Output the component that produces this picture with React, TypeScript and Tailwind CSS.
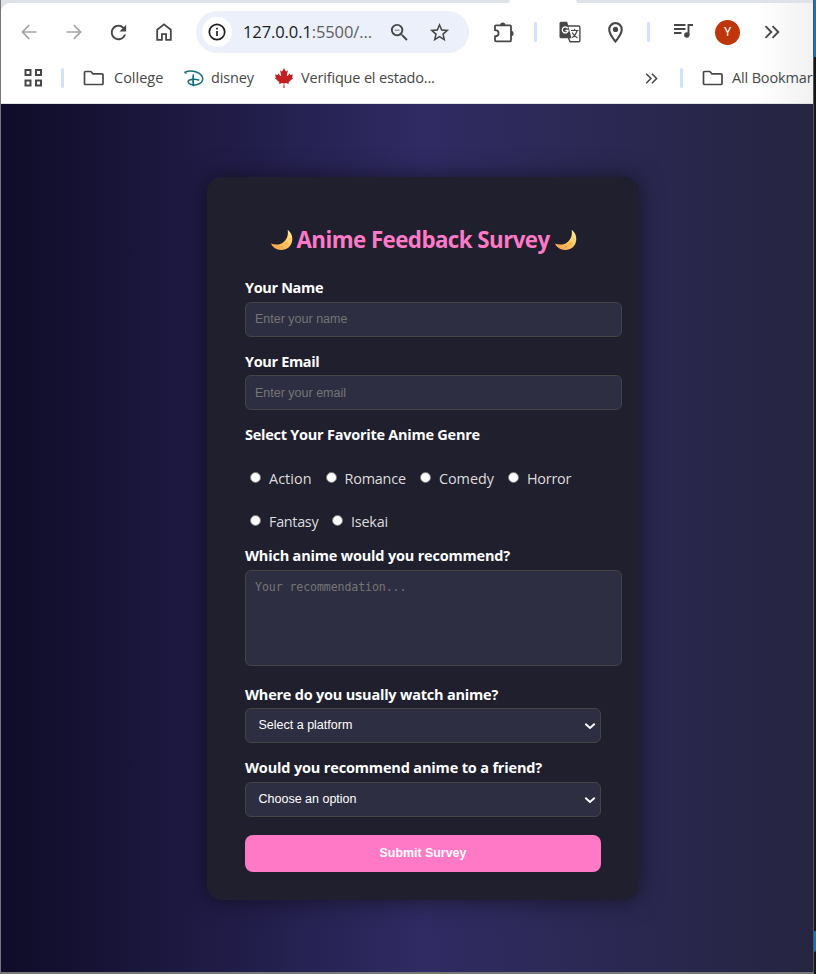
import React from "react";
import { MdOutlineLocationOn, MdZoomOut, MdStarBorder, MdRefresh } from "react-icons/md";
import { FaCanadianMapleLeaf } from "react-icons/fa";

function Moon() {
  return (
    <svg width="23" height="22" viewBox="0 0 23 22" className="shrink-0">
      <defs>
        <linearGradient id="moon" x1="0" y1="1" x2="1" y2="0">
          <stop offset="0" stopColor="#f79a4b" />
          <stop offset="0.55" stopColor="#ffc85f" />
          <stop offset="1" stopColor="#fff0a8" />
        </linearGradient>
      </defs>
      <path d="M17.6.8C21 3.400 22.800 7 22.200 11.500C21.500 17.500 16.500 21.300 10.800 21C6.500 20.800 2.800 18.600.8 14.600C5.500 16.300 10.500 16 14 12.800C17.500 9.600 18.500 5 17.600.8Z" fill="url(#moon)" />
      <circle cx="16.500" cy="14.500" r="1.300" fill="#efa246" opacity=".6" />
      <circle cx="12" cy="18" r="1" fill="#e98a3c" opacity=".5" />
      <circle cx="19.800" cy="10" r=".9" fill="#efb04c" opacity=".6" />
    </svg>
  );
}

function Arrow({ flip = false }: { flip?: boolean }) {
  return (
    <svg width="16" height="16" viewBox="0 0 16 16" fill="none" stroke="#a5a5a5" strokeWidth="1.700" className={flip ? "rotate-180" : ""}>
      <path d="M15.500 8H1.500M8.200 1.200L1.400 8l6.800 6.800" />
    </svg>
  );
}

function Folder() {
  return (
    <svg width="22" height="16" viewBox="0 0 22 16" fill="none" stroke="#474747" strokeWidth="1.700" strokeLinejoin="round">
      <path d="M1.500 2.500a1 1 0 0 1 1-1h5.300l2.200 2.300h9a1 1 0 0 1 1 1v8.700a1 1 0 0 1-1 1H2.500a1 1 0 0 1-1-1z" />
    </svg>
  );
}

function Chevrons({ size }: { size: number }) {
  return (
    <svg width={size} height={size} viewBox="0 0 16 16" fill="none" stroke="#474747" strokeWidth="1.900">
      <path d="M1.500 2.200L7.300 8l-5.800 5.800M8.500 2.200L14.300 8l-5.800 5.800" />
    </svg>
  );
}

function Divider({ className }: { className: string }) {
  return <div className={`h-5 w-[3px] shrink-0 rounded-full bg-[#d0e2fd] ${className}`} />;
}

function Toolbar() {
  return (
    <div className="flex h-[58px] items-center pl-[20px]">
      <Arrow />
      <div className="ml-[29px]"><Arrow flip /></div>
      <MdRefresh className="ml-[25px] size-[23px] text-[#474747]" />
      <svg className="ml-[26px]" width="16" height="18" viewBox="0 0 16 18" fill="none" stroke="#474747" strokeWidth="1.800">
        <path d="M1.200 6.800L8 1.300l6.800 5.500v10h-4.700v-5.600H5.900v5.600H1.200z" />
      </svg>
      <div className="ml-[24px] flex h-[42px] w-[273px] shrink-0 items-center rounded-full bg-[#ebf0fa] pl-[6px]">
        <div className="flex size-[30px] shrink-0 items-center justify-center rounded-full bg-white">
          <svg width="18" height="18" viewBox="0 0 18 18" fill="none" stroke="#202020" strokeWidth="1.700">
            <circle cx="9" cy="9" r="7.700" />
            <path d="M9 8v5M9 4.700v1.800" />
          </svg>
        </div>
        <div className="ml-[11px] w-[130px] whitespace-nowrap font-['Open_Sans',sans-serif] text-[16.500px] tracking-[-0.1px] text-[#5f5f5f]">
          <span className="text-[#202020]">127.0.0.1</span>:5500/...
        </div>
        <MdZoomOut className="ml-[15px] size-[23px] shrink-0 text-[#474747]" />
        <MdStarBorder className="ml-[17px] size-[23px] shrink-0 text-[#474747]" />
      </div>
      <svg className="ml-[24px] shrink-0" width="21" height="21" viewBox="0 0 21 21">
        <path d="M3 3.300h14a1 1 0 0 1 1 1v14a1 1 0 0 1-1 1H3a1 1 0 0 1-1-1v-4c4.800-.2 4.800-6 0-6.200V4.300a1 1 0 0 1 1-1z" fill="none" stroke="#474747" strokeWidth="1.800" />
        <path d="M7.200 3a2.600 2.600 0 0 1 5.200 0zM18 8.800a2.600 2.600 0 0 1 0 5.200z" fill="#474747" />
      </svg>
      <Divider className="ml-[20px]" />
      <svg className="ml-[22px] shrink-0" width="22" height="22" viewBox="0 0 22 22">
        <path d="M9 5h10.500a1.400 1.400 0 0 1 1.400 1.400v13a1.400 1.400 0 0 1-1.400 1.400h-8.500L9.500 17" fill="#fff" stroke="#474747" strokeWidth="1.400" />
        <path d="M2 .8h6.200l4.300 16.500H2A1.500 1.500 0 0 1 .5 15.800V2.300A1.500 1.500 0 0 1 2 .8z" fill="#474747" />
        <path d="M8.800 7.300A3 3 0 1 0 9 10.300V9.500H6.300" fill="none" stroke="#fff" strokeWidth="1.300" />
        <path d="M12 9.500h7.500M15.500 7.800v1.700M18.200 9.500c-.7 3-2.500 5.300-5 7.300M13.200 11.500c1.200 2.500 3 4.300 5.300 5.600" fill="none" stroke="#474747" strokeWidth="1.200" />
      </svg>
      <MdOutlineLocationOn className="ml-[22px] size-[25px] shrink-0 text-[#474747]" />
      <Divider className="ml-[19px]" />
      <svg className="relative -top-px ml-[23px] shrink-0" width="21" height="18" viewBox="0 0 21 18" fill="none" stroke="#474747" strokeWidth="1.900">
        <path d="M1 3h11.500M1 7h11.500M1 11h7.500M15.500 13V3h4.500" />
        <circle cx="13.800" cy="13" r="2.700" fill="#474747" stroke="none" />
      </svg>
      <div className="ml-[21px] flex size-[25px] shrink-0 items-center justify-center rounded-full bg-[#bf360c] font-[Roboto,sans-serif] text-[12px] text-white">Y</div>
      <div className="ml-[24px] shrink-0"><Chevrons size={16} /></div>
    </div>
  );
}

function Bookmarks() {
  return (
    <div className="flex h-[34px] items-center pl-[22px] font-['Open_Sans',sans-serif] text-[14.500px] text-[#474747]">
      <svg className="shrink-0" width="20" height="18" viewBox="0 0 20 18" fill="none" stroke="#474747" strokeWidth="2">
        <path d="M2.500 1h5v5h-5zM13 1h5v5h-5zM2.500 11.500h5v5h-5zM13 11.500h5v5h-5z" />
      </svg>
      <Divider className="ml-[18px]" />
      <div className="ml-[19px] shrink-0"><Folder /></div>
      <span className="ml-[9px] w-[50px] shrink-0 whitespace-nowrap">College</span>
      <svg className="ml-[20px] shrink-0" width="20" height="17" viewBox="0 0 20 17" fill="none" stroke="#176b7c" strokeLinecap="round">
        <path d="M1 2.300C8-.8 18 2.500 18.700 8.500C19.200 13.500 11.500 16.200 6.500 14.200C3.300 12.800 3 9.800 8 9.400C11 9.200 13.500 9.600 14.700 10" strokeWidth="1.500" />
        <path d="M9.300 5.200c-.5 3-.5 6.500.1 10.500" strokeWidth="1.700" />
        <path d="M1 2.300c-.5.500 0 1 1.300 1" strokeWidth="1" />
      </svg>
      <span className="ml-[7px] w-[43px] shrink-0 whitespace-nowrap tracking-[-0.15px]">disney</span>
      <FaCanadianMapleLeaf className="ml-[20px] size-[20px] shrink-0 text-[#c41f20]" />
      <span className="ml-[7px] w-[135px] shrink-0 whitespace-nowrap tracking-[-0.170px]">Verifique el estado...</span>
      <div className="ml-[209px] shrink-0"><Chevrons size={13} /></div>
      <Divider className="ml-[22px]" />
      <div className="ml-[19px] shrink-0"><Folder /></div>
      <span className="ml-[8px] shrink-0 whitespace-nowrap tracking-[-0.150px]">All Bookmar</span>
    </div>
  );
}

const labelClass = "h-5 whitespace-nowrap font-['Open_Sans',sans-serif] text-[14.500px] leading-5 font-bold text-white";
const fieldClass = "block w-[377px] rounded-[6px] border border-[#444] bg-[#2e2e42] px-[9px] placeholder-[#757575] outline-none";

function Radio({ label, text, width }: { label: string; text: string; width: string }) {
  return (
    <label className={`flex h-5 items-center ${width}`}>
      <span className="mb-[3px] size-[11px] shrink-0 rounded-full border border-[#767676] bg-white" />
      <span className={`ml-[8px] whitespace-nowrap ${text}`}>{label}</span>
    </label>
  );
}

function Select({ children }: { children: React.ReactNode }) {
  return (
    <div className="flex h-[35px] w-[356px] items-center justify-between rounded-[6px] border border-[#444] bg-[#2e2e42] pr-[4px] pl-[12.500px] text-[12.500px] text-white">
      <span>{children}</span>
      <svg width="12" height="8" viewBox="0 0 12 8" fill="none" stroke="#fff" strokeWidth="1.900">
        <path d="M1.300 1.700L6 5.900l4.700-4.200" />
      </svg>
    </div>
  );
}

function Survey() {
  return (
    <form className="h-[723px] w-[432px] shrink-0 rounded-[15px] bg-[#1f1f2e] pt-[47px] pl-[38px] font-['Liberation_Sans',sans-serif] shadow-[0_0_25px_rgba(0,0,0,0.5)]">
      <h1 className="flex h-[32px] w-[356px] items-center justify-center gap-[3px] whitespace-nowrap font-['Open_Sans',sans-serif] text-[22.300px] font-bold text-[#ff79c6]">
        <Moon />
        <span className="mx-px w-[253px] tracking-[-0.550px]">Anime Feedback Survey</span>
        <Moon />
      </h1>
      <div className={`mt-[22px] tracking-[-0.350px] ${labelClass}`}>Your Name</div>
      <input className={`mt-[4px] h-[35px] pb-[2px] text-[12.500px] ${fieldClass}`} placeholder="Enter your name" />
      <div className={`mt-[15px] tracking-[-0.350px] ${labelClass}`}>Your Email</div>
      <input className={`mt-[3px] h-[35px] text-[12.500px] ${fieldClass}`} placeholder="Enter your email" />
      <div className={`mt-[15px] tracking-[-0.250px] ${labelClass}`}>Select Your Favorite Anime Genre</div>
      <div className="mt-[24px] flex pl-[5px] font-['Open_Sans',sans-serif] text-[14.400px] text-[#ddd]">
        <Radio label="Action" width="w-[75.500px]" text="tracking-[0.05px]" />
        <Radio label="Romance" width="w-[94.500px]" text="tracking-[-0.2px]" />
        <Radio label="Comedy" width="w-[88px]" text="tracking-[-0.05px]" />
        <Radio label="Horror" width="w-[76px]" text="tracking-[-0.250px]" />
      </div>
      <div className="mt-[23px] flex pl-[5px] font-['Open_Sans',sans-serif] text-[14.400px] text-[#ddd]">
        <Radio label="Fantasy" width="w-[82px]" text="tracking-[-0.3px]" />
        <Radio label="Isekai" width="w-[76px]" text="tracking-[-0.2px]" />
      </div>
      <div className={`mt-[14px] tracking-[-0.190px] ${labelClass}`}>Which anime would you recommend?</div>
      <textarea className={`mt-[4px] h-[96px] resize-none pt-[8px] font-['DejaVu_Sans_Mono',monospace] text-[11.600px] leading-[17px] tracking-[-0.1px] ${fieldClass}`} placeholder="Your recommendation..." />
      <div className={`mt-[19px] tracking-[-0.210px] ${labelClass}`}>Where do you usually watch anime?</div>
      <div className="mt-[3px]"><Select>Select a platform</Select></div>
      <div className={`mt-[15px] tracking-[-0.160px] ${labelClass}`}>Would you recommend anime to a friend?</div>
      <div className="mt-[4px]"><Select>Choose an option</Select></div>
      <button type="button" className="mt-[18px] block h-[37px] w-[356px] rounded-[8px] bg-[#ff79c6] text-[12.400px] font-bold text-white">Submit Survey</button>
    </form>
  );
}

export default function App() {
  return (
    <div className="flex h-[974px] w-[816px] overflow-hidden bg-[#151515]">
      <div className="flex h-[974px] w-[814px] shrink-0 flex-col overflow-hidden border-r border-b-2 border-l border-[#777] border-r-[#555] bg-[#dfe3e9]">
        <div className="flex h-[3px] shrink-0 pl-[508px]">
          <div className="h-[3px] w-[68px] rounded-t-[34px] bg-white" />
        </div>
        <header className="h-[101px] shrink-0 overflow-hidden rounded-tl-[9px] border-b border-[#dce2dc] bg-white">
          <div className="h-full bg-linear-to-r from-white from-93% to-[#f1f1f1]">
            <Toolbar />
            <Bookmarks />
          </div>
        </header>
        <main className="flex w-[844px] flex-1 items-start justify-center bg-linear-to-r from-[#0f0c29] via-[#302b63] to-[#24243e] pt-[73px]">
          <Survey />
        </main>
      </div>
      <aside className="flex w-[2px] flex-col justify-between pb-[22px]">
        <div className="h-[57px] bg-[#0078d4]" />
        <div className="h-[21px] rounded-br-[2px] bg-[#0078d4]" />
      </aside>
    </div>
  );
}
